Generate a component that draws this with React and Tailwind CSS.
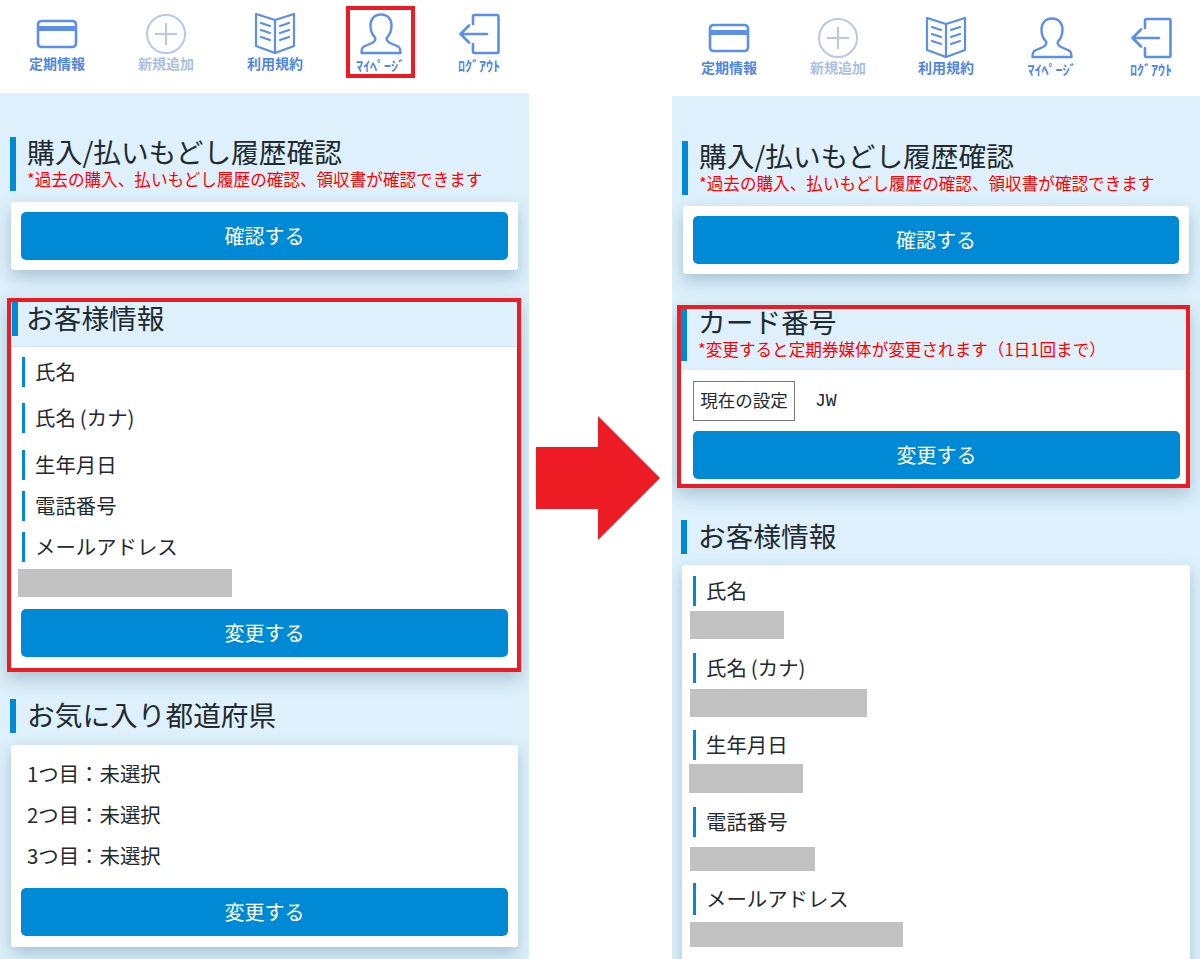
const FONT = '"Noto Sans CJK JP","Noto Sans",sans-serif';
const ICON = "#5b8fe8";

const CardIcon = ({ c }) => (
  <svg width="42" height="42" viewBox="0 0 42 42" fill="none" stroke={c} strokeWidth="2.6" strokeLinejoin="round">
    <rect x="2" y="8" width="38" height="26" rx="3.5" />
    <rect x="2" y="13" width="38" height="5" fill={c} stroke="none" />
  </svg>
);
const PlusIcon = ({ c }) => (
  <svg width="42" height="42" viewBox="0 0 42 42" fill="none" stroke={c} strokeWidth="2">
    <circle cx="21" cy="21" r="19" />
    <path d="M21 10v22M10 21h22" />
  </svg>
);
const BookIcon = ({ c }) => (
  <svg width="42" height="42" viewBox="0 0 42 42" fill="none" stroke={c} strokeWidth="2.2" strokeLinejoin="round" strokeLinecap="round">
    <path d="M21 7 L2 1 V33 L21 40 L40 33 V1 Z" />
    <path d="M21 7V40" />
    <path d="M7 10l9 3M7 17l9 3M7 24l9 3M35 10l-9 3M35 17l-9 3M35 24l-9 3" />
  </svg>
);
const UserIcon = ({ c }) => (
  <svg width="42" height="42" viewBox="0 0 42 42" fill="none" stroke={c} strokeWidth="2.4" strokeLinejoin="round">
    <path d="M21 1.5c-7 0-10.5 5-10.5 11 0 5 1.5 9 4.5 12 1 1.500 0 4-3 5.500L4 33.500C2 34.500 1.500 36.500 1.500 40H40.500C40.500 36.500 40 34.500 38 33.500L30 30c-3-1.500-4-4-3-5.500 3-3 4.500-7 4.500-12 0-6-3.500-11-10.500-11Z" />
  </svg>
);
const LogoutIcon = ({ c }) => (
  <svg width="42" height="42" viewBox="0 0 42 42" fill="none" stroke={c} strokeWidth="2.6" strokeLinejoin="round" strokeLinecap="round">
    <path d="M15 11V3.500C15 2.500 15.500 2 16.500 2H39c1 0 1.500.5 1.500 1.500V38.500c0 1-.5 1.500-1.500 1.500H16.500c-1 0-1.500-.5-1.500-1.500V31" />
    <path d="M29 21H3M11 12.500L2.500 21l8.500 8.500" />
  </svg>
);

const NavItem = ({ Icon, label, className, textClass, color = ICON, highlighted }) => (
  <div className={`flex flex-col items-center shrink-0 ${highlighted ? "border-4 border-[#ed1c24] h-[72px] pt-[3px] mt-[2px]" : "pt-[9px] h-[73px]"} ${className}`}>
    <Icon c={color} />
    <span className={`whitespace-nowrap font-bold leading-[16px] ${textClass}`} style={{ color: color === ICON ? "#4f86e6" : "#a9c0e6" }}>{label}</span>
  </div>
);

const Header = ({ highlight, h }) => (
  <div className={`bg-white flex items-start pl-[22px] ${h}`}>
    <NavItem Icon={CardIcon} label="定期情報" className="w-[70px]" textClass="text-[14px]" />
    <NavItem Icon={PlusIcon} label="新規追加" className="w-[70px] ml-[39px]" textClass="text-[14px]" color="#b7c9e8" />
    <NavItem Icon={BookIcon} label="利用規約" className={highlight ? "w-[70px] ml-[39px]" : "w-[70px] ml-[38px]"} textClass="text-[14px]" />
    <NavItem Icon={UserIcon} label="ﾏｲﾍﾟｰｼﾞ" className={highlight ? "w-[69px] ml-[36px]" : "w-[70px] ml-[36px]"} textClass="text-[14px] mt-[2px]" highlighted={highlight} />
    <NavItem Icon={LogoutIcon} label="ﾛｸﾞｱｳﾄ" className="w-[70px] ml-[29px]" textClass="text-[14px] mt-[2px]" />
  </div>
);

const Heading = ({ title, note, className = "", titleClass = "leading-[30px]", noteClass = "", padClass = "pl-[11px]" }) => (
  <div className={`border-l-[6px] border-[#0089d5] ${padClass} ${className}`}>
    <div className={`text-[27.7px] text-[#222a30] whitespace-nowrap ${titleClass}`}>{title}</div>
    {note && <div className={`text-[16.6px] leading-[20px] text-[#ff0000] whitespace-nowrap ${noteClass}`}>{note}</div>}
  </div>
);

const Button = ({ label, className = "" }) => (
  <div className={`h-[48px] rounded-[5px] bg-[#0089d5] text-white text-[20px] flex items-center justify-center ${className}`}>{label}</div>
);

const SHADOW = "shadow-[0_7px_16px_rgba(90,130,155,0.4)]";

const Card = ({ children, className = "" }) => (
  <div className={`bg-white rounded-[3px] shadow-[0_7px_16px_rgba(90,130,155,0.4)] ${className}`}>{children}</div>
);

const Label = ({ text, className = "" }) => (
  <div className={`border-l-[3px] border-[#0089d5] h-[30px] pl-[10px] pb-[2px] flex items-center text-[20.4px] text-[#222a30] whitespace-nowrap ${className}`}>{text}</div>
);

const Gray = ({ className }) => <div className={`bg-[#c1c1c1] ${className}`} />;

const PurchaseSection = () => (
  <>
    <Heading
      className="ml-[10px] h-[54px]"
      titleClass="leading-[29px]"
      noteClass="mt-[3px]"
      title="購入/払いもどし履歴確認"
      note="*過去の購入、払いもどし履歴の確認、領収書が確認できます"
    />
    <Card className="ml-[11px] mr-[11px] mt-[11px] p-[10px]">
      <Button label="確認する" />
    </Card>
  </>
);

const KANA = "氏名\u2009(カナ)";

const Left = () => (
  <div className="w-[529px] shrink-0 bg-[#ddf0fb] h-[959px] overflow-hidden">
    <Header highlight h="h-[93px] pt-[4px]" />
    <div className="pt-[44px]">
      <PurchaseSection />
      <div className={`ml-[7px] mr-[8px] mt-[28px] border-4 border-[#ed1c24] ${SHADOW}`}>
        <div className="h-[45px] border-b border-[#d5e3ec]">
          <Heading className="ml-[1px] h-[34px]" padClass="pl-[8px]" title="お客様情報" />
        </div>
        <div className="bg-white pt-[10px] pb-[11px] pl-[10px] pr-[9px]">
          <Label className="ml-[1px]" text="氏名" />
          <Label className="ml-[1px] mt-[16px]" text={KANA} />
          <Label className="ml-[1px] mt-[17px]" text="生年月日" />
          <Label className="ml-[1px] mt-[11px]" text="電話番号" />
          <Label className="ml-[1px] mt-[11px]" text="メールアドレス" />
          <Gray className="h-[28px] w-[214px] mt-[7px] -ml-[3px]" />
          <Button className="mt-[12px]" label="変更する" />
        </div>
      </div>
      <Heading className="ml-[10px] mt-[27px] h-[34px]" title="お気に入り都道府県" />
      <Card className="ml-[11px] mr-[11px] mt-[12px] px-[10px] pb-[11px] pt-[8px]">
        {["1つ目：未選択", "2つ目：未選択", "3つ目：未選択"].map((t) => (
          <div key={t} className="h-[41px] pl-[6px] flex items-center text-[20.4px] text-[#222a30]">{t}</div>
        ))}
        <Button className="mt-[12px]" label="変更する" />
      </Card>
    </div>
  </div>
);

const Right = () => (
  <div className="w-[528px] shrink-0 bg-[#ddf0fb] h-[959px] overflow-hidden">
    <Header h="h-[96px] pt-[8px]" />
    <div className="pt-[45px]">
      <PurchaseSection />
      <div className={`ml-[5px] mr-[10px] mt-[31px] border-4 border-[#ed1c24] ${SHADOW}`}>
        <div className="h-[61px] pb-[7px]">
          <Heading
            className="h-[52px]"
            titleClass="leading-[24px]"
            noteClass="mt-[6px]"
            title="カード番号"
            note="*変更すると定期券媒体が変更されます（1日1回まで）"
          />
        </div>
        <div className="bg-white pt-[11px] pb-[5px] pl-[12px] pr-[6px]">
          <div className="flex items-center">
            <div className="border border-[#777] h-[40px] w-[102px] pb-[1px] flex items-center justify-center text-[17.5px] text-[#222a30] whitespace-nowrap">現在の設定</div>
            <div className="ml-[20px] text-[18px] text-[#222a30]" style={{ fontFamily: '"Liberation Mono",monospace' }}>JW</div>
          </div>
          <Button className="mt-[10px]" label="変更する" />
        </div>
      </div>
      <Heading className="ml-[9px] mt-[32px] h-[34px]" title="お客様情報" />
      <Card className="ml-[10px] mr-[10px] mt-[11px] pt-[11px] pb-[20px] px-[11px]">
        <Label text="氏名" />
        <Gray className="h-[28px] w-[94px] mt-[5px] -ml-[3px]" />
        <Label className="mt-[14px]" text={KANA} />
        <Gray className="h-[28px] w-[177px] mt-[6px] -ml-[3px]" />
        <Label className="mt-[13px]" text="生年月日" />
        <Gray className="h-[29px] w-[114px] mt-[4px] -ml-[4px]" />
        <Label className="mt-[14px]" text="電話番号" />
        <Gray className="h-[24px] w-[125px] mt-[10px] -ml-[3px]" />
        <Label className="mt-[12px] h-[32px]" text="メールアドレス" />
        <Gray className="h-[25px] w-[213px] mt-[7px] -ml-[3px]" />
      </Card>
    </div>
  </div>
);

const Arrow = () => (
  <div className="flex-1 h-[959px] bg-white flex items-start justify-start pl-[7px] pt-[416px]">
    <svg width="124" height="124" viewBox="0 0 124 124">
      <path d="M0 31H62V0L124 62L62 124V93H0Z" fill="#ed1c24" />
    </svg>
  </div>
);

export default function App() {
  return (
    <div className="w-[1200px] h-[959px] flex overflow-hidden bg-white" style={{ fontFamily: FONT }}>
      <Left />
      <Arrow />
      <Right />
    </div>
  );
}
